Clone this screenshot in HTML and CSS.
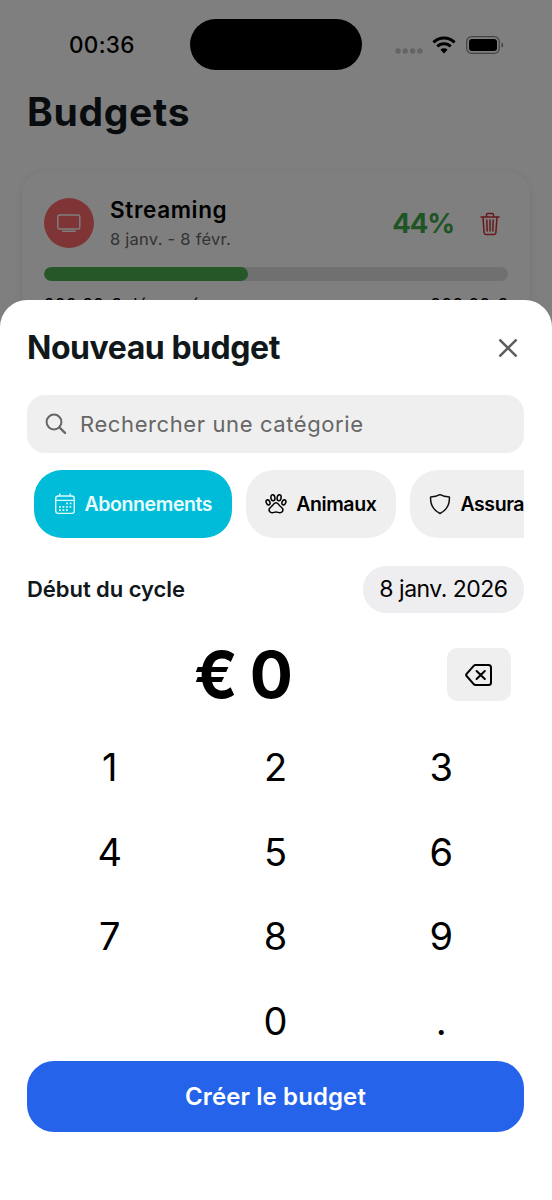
FILE: index.html
```html
<!DOCTYPE html>
<html lang="fr">
<head>
<meta charset="utf-8">
<meta name="viewport" content="width=device-width, initial-scale=1">
<title>Budgets</title>
<link rel="stylesheet" href="styles.css">
</head>
<body>
<div class="phone">
  <div class="page">
    <header class="status">
      <span class="clock">00:36</span>
      <span class="island"></span>
      <span class="signals">
        <svg class="dots" width="28" height="6" viewBox="0 0 28 6" fill="#c8c8c8"><circle cx="3" cy="3" r="2.7"/><circle cx="10.3" cy="3" r="2.7"/><circle cx="17.6" cy="3" r="2.7"/><circle cx="24.9" cy="3" r="2.7"/></svg>
        <svg class="wifi" width="24" height="18" viewBox="0 0 24 18" fill="none" stroke="#000" stroke-width="3"><path d="M1.4 6.3a15.2 15.2 0 0 1 21.2 0M5.3 10.5a9.6 9.6 0 0 1 13.4 0"/><path d="M8.4 13.7a5.2 5.2 0 0 1 7.2 0L12 17.4z" fill="#000" stroke="none"/></svg>
        <svg class="battery" width="38" height="18" viewBox="0 0 38 18"><rect x=".7" y=".7" width="32.6" height="16.6" rx="5" fill="none" stroke="#858585" stroke-width="1.3"/><rect x="3" y="3" width="28" height="12" rx="3"/><path d="M35.6 6.4c2 .6 2 4.6 0 5.2z" fill="#777"/></svg>
      </span>
    </header>
    <h1 class="title">Budgets</h1>
    <section class="card">
      <div class="card-head">
        <span class="avatar"><svg width="24" height="19" viewBox="0 0 24 19" fill="none" stroke="#fff" stroke-width="1.4" stroke-linecap="round"><rect x=".8" y="1" width="22" height="14" rx="1.6"/><path d="M5.8 17.3h12.4" stroke-width="1.5"/></svg></span>
        <div class="meta"><span class="name">Streaming</span><span class="dates">8 janv. - 8 févr.</span></div>
        <span class="percent">44%</span>
        <svg class="trash" width="20" height="24" viewBox="0 0 20 24" fill="none" stroke="#cf3035" stroke-width="1.5" stroke-linecap="round" stroke-linejoin="round"><path d="M1 5h18M3 5l1.1 15.8c.1 1.1.7 1.7 1.8 1.7h8.2c1.1 0 1.7-.6 1.8-1.7L17 5M6.5 4.8V2.7c0-.8.4-1.2 1.2-1.2h4.6c.8 0 1.2.4 1.2 1.2v2.1M10 8v11M6.8 8l.4 11M13.2 8l-.4 11"/></svg>
      </div>
      <div class="track"><div class="fill" style="width:44%"></div></div>
      <div class="amounts"><span>222,22 € dépensés</span><span>888,88 €</span></div>
    </section>
  </div>
  <div class="scrim"></div>
  <main class="sheet">
    <div class="sheet-head">
      <h2>Nouveau budget</h2>
      <svg width="18" height="18" viewBox="0 0 18 18" stroke="#5f5f5f" stroke-width="2.6" stroke-linecap="round"><path d="M1.3 1.3l15.4 15.4M16.7 1.3L1.3 16.7"/></svg>
    </div>
    <div class="search">
      <svg width="22" height="22" viewBox="0 0 22 22" fill="none" stroke="#666" stroke-width="2" stroke-linecap="round"><circle cx="9" cy="9" r="7.4"/><path d="M14.5 14.5l5.5 5.3" stroke-width="2.4"/></svg>
      <span>Rechercher une catégorie</span>
    </div>
    <div class="chips">
      <div class="chip active"><svg width="22" height="22" viewBox="0 0 22 22" fill="none" stroke="#d9faff" stroke-width="1.4"><rect x="1.7" y="3" width="18.6" height="17.4" rx="2.6"/><path d="M1.7 7.4h18.6M5.8 1v2M16.2 1v2" stroke-linecap="round"/><path d="M12.2 10.4h6M5 13.8h13M5 17.2h10" stroke-width="1.8" stroke-dasharray="1.8 1.7"/></svg><span>Abonnements</span></div>
      <div class="chip"><svg width="22" height="22" viewBox="0 0 22 22" fill="none" stroke="#000" stroke-width="1.5"><ellipse cx="7.9" cy="4.7" rx="2" ry="3" transform="rotate(-10 7.9 4.7)"/><ellipse cx="14.1" cy="4.7" rx="2" ry="3" transform="rotate(10 14.1 4.7)"/><ellipse cx="3.1" cy="9.4" rx="1.8" ry="2.6" transform="rotate(-25 3.1 9.4)"/><ellipse cx="18.9" cy="9.4" rx="1.8" ry="2.6" transform="rotate(25 18.9 9.4)"/><path d="M11 9.8c-1.7 0-2.5 1.2-3.2 2.3-.8 1.2-2.2 1.9-3.1 3.1-1.5 2.1.1 4.8 2.6 4.6 1.3-.1 2.4-.8 3.7-.8s2.4.7 3.7.8c2.5.2 4.1-2.5 2.6-4.6-.9-1.2-2.3-1.9-3.1-3.1-.7-1.1-1.5-2.3-3.2-2.3z"/></svg><span>Animaux</span></div>
      <div class="chip"><svg width="22" height="22" viewBox="0 0 22 22" fill="none" stroke="#111" stroke-width="1.5" stroke-linejoin="round"><path d="M11 1.6C8.3 3 4.8 3.8 1.6 4c-.4 7.2 2.2 12.9 9.4 16.5C18.2 16.9 20.8 11.2 20.4 4 17.2 3.8 13.7 3 11 1.6z"/></svg><span>Assurances</span></div>
    </div>
    <div class="cycle"><span class="cycle-label">Début du cycle</span><span class="date">8 janv. 2026</span></div>
    <div class="amount">
      <span class="value"><span class="euro">€</span><span>0</span></span>
      <span class="erase"><svg width="28" height="22" viewBox="0 0 28 22" fill="none" stroke="#000" stroke-width="2" stroke-linecap="round" stroke-linejoin="round"><path d="M10.3 1.1h13.2c1.6 0 2.5.9 2.5 2.5v14.8c0 1.6-.9 2.5-2.5 2.5H10.3c-.6 0-1-.2-1.4-.6L1.6 12c-.6-.7-.6-1.4 0-2.1l7.3-8.2c.4-.4.8-.6 1.4-.6zM11.6 7l8.2 8M19.8 7l-8.2 8"/></svg></span>
    </div>
    <div class="keys">
      <span>1</span><span>2</span><span>3</span>
      <span>4</span><span>5</span><span>6</span>
      <span>7</span><span>8</span><span>9</span>
      <span></span><span>0</span><span>.</span>
    </div>
    <div class="submit">Créer le budget</div>
  </main>
</div>
</body>
</html>
```
FILE: styles.css
```css
* { box-sizing: border-box; }
body { margin: 0; font-family: Inter, "Liberation Sans", sans-serif; color: #000; }
h1, h2 { margin: 0; }
svg { display: block; flex: none; }
span { white-space: nowrap; }
.phone { position: relative; width: 552px; height: 1200px; overflow: hidden; background: #fff; }
.page { height: 100%; }
.scrim { position: absolute; inset: 0; background: rgba(0, 0, 0, .5); }

.status { display: flex; align-items: center; height: 89px; padding: 0 47px 0 69px; }
.clock { width: 121px; font-size: 22.5px; font-weight: 500; letter-spacing: .3px; }
.island { width: 172px; height: 51px; border-radius: 26px; background: #000; }
.signals { display: flex; align-items: center; margin-left: 33px; }
.dots { margin-top: 12px; }
.wifi { margin-left: 9px; }
.battery { margin-left: 10px; }

.title { padding-left: 27px; line-height: 46px; font-size: 39px; font-weight: 700; letter-spacing: .7px; color: #11181c; }
.card { height: 200px; margin: 36px 22px 0; padding: 27px 22px; border-radius: 24px; background: #fff; box-shadow: 0 2px 10px rgba(0, 0, 0, .1); }
.card-head { display: flex; align-items: center; height: 50px; }
.avatar { display: flex; align-items: center; justify-content: center; width: 50px; height: 50px; border-radius: 50%; background: #ff6b6b; }
.meta { display: flex; flex-direction: column; flex: 1; margin-left: 16px; padding-top: 1px; }
.name { line-height: 30px; font-size: 22.5px; font-weight: 600; letter-spacing: .65px; }
.dates { line-height: 28px; font-size: 16.5px; letter-spacing: .25px; color: #666; }
.percent { font-size: 27.5px; font-weight: 700; letter-spacing: -1.1px; color: #3fa849; }
.trash { margin: 2px 8px 0 26px; }
.track { height: 14px; margin-top: 19px; border-radius: 7px; background: #e0e0e0; overflow: hidden; }
.fill { height: 100%; border-radius: 7px; background: #4caf50; }
.amounts { display: flex; justify-content: space-between; margin-top: 12px; line-height: 24px; font-size: 17px; letter-spacing: .6px; }

.sheet { position: absolute; left: 0; right: 0; top: 300px; bottom: 0; padding: 0 28px 0 27px; border-radius: 27px 27px 0 0; background: #fff; }
.sheet-head { display: flex; align-items: center; justify-content: space-between; height: 95px; padding-right: 7px; }
h2 { font-size: 32px; font-weight: 700; letter-spacing: -.45px; color: #11181c; }
.search { display: flex; align-items: center; gap: 13px; height: 58px; padding-left: 18px; border-radius: 18px; background: #efefef; color: #666; font-size: 22px; letter-spacing: .6px; }
.chips { display: flex; gap: 14px; height: 68px; margin-top: 17px; padding-left: 7px; overflow: hidden; }
.chip { display: flex; flex: none; align-items: center; gap: 9px; padding: 0 19.5px; border-radius: 28px; background: #efefef; font-size: 19.5px; font-weight: 600; letter-spacing: -.4px; }
.chip.active { background: #00bcd8; color: #e9fcff; }
.cycle { display: flex; align-items: center; justify-content: space-between; height: 46px; margin-top: 28px; }
.cycle-label { font-size: 22px; font-weight: 600; letter-spacing: -.05px; color: #11181c; }
.date { width: 161px; line-height: 47px; border-radius: 23px; background: #eeeef0; text-align: center; font-size: 23px; letter-spacing: -.5px; }
.amount { display: grid; grid-template-columns: 1fr 64px; align-items: center; height: 52px; margin-top: 36px; padding-right: 13px; }
.value { display: flex; gap: 12px; padding-left: 167px; line-height: 52px; font-size: 64px; font-weight: 700; }
.erase { display: flex; align-items: center; justify-content: center; height: 53px; border-radius: 10px; background: #efefef; }
.keys { display: grid; grid-template-columns: repeat(3, 1fr); grid-auto-rows: 84.6px; margin-top: 24px; height: 337px; text-align: center; font-size: 38px; line-height: 87px; }
.submit { height: 71px; line-height: 72px; border-radius: 27px; background: #2563eb; color: #fff; text-align: center; font-size: 24px; font-weight: 600; letter-spacing: .1px; }
```
